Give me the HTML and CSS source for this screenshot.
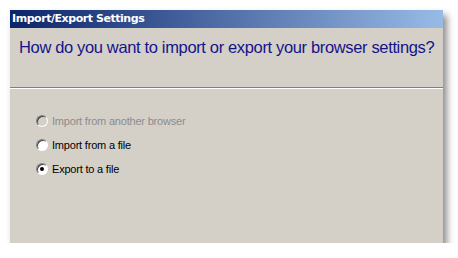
FILE: index.html
```
<!DOCTYPE html>
<html lang="en">
<head>
  <meta charset="UTF-8">
  <title>Import/Export Settings</title>
  <link rel="stylesheet" href="styles.css">
</head>
<body>

<div class="window">
  <div class="titlebar">Import/Export Settings</div>
  <div class="header">How do you want to import or export your browser settings?</div>
  <div class="separator"></div>
  <div class="options">
    <label class="option disabled"><span class="radio"></span>Import from another browser</label>
    <label class="option"><span class="radio"></span>Import from a file</label>
    <label class="option"><span class="radio checked"></span>Export to a file</label>
  </div>
</div>

</body>
</html>
```

FILE: styles.css
```
* { margin:0; padding:0; box-sizing:border-box; }

body { background:#fff; font-family:"Liberation Sans", Arial, sans-serif; }

.window { width:433px; height:233px; margin:10px 0 0 10px; background:#d4d0c8; box-shadow:4px 5px 7px rgba(0,0,0,.45); }

.titlebar { height:18px; padding:2px 0 0 2px; color:#fff; font:bold 11px "DejaVu Sans", Verdana, sans-serif; letter-spacing:-.45px;
  background:linear-gradient(to right, #0a246a, #98bbe6); }

.header { height:59px; padding:10px 0 0 9px; color:#14148a; font-size:16.5px; letter-spacing:-.35px; white-space:nowrap; }

.separator { border-top:1px solid #808080; border-bottom:1px solid #fff; }

.options { display:flex; flex-direction:column; gap:11px; padding:25px 0 0 26px; }

.option { display:flex; align-items:center; gap:4px; height:13px; font-size:11px; letter-spacing:-.2px; color:#000; }
.option.disabled { color:#8c8c8c; }

.radio { width:12px; height:12px; border-radius:50%; background:#fff; position:relative;
  border:1px solid; border-color:#808080 #fff #fff #808080; box-shadow:inset 1px 1px 0 #404040; }
.disabled .radio { background:#d4d0c8; }
.radio.checked::after { content:""; position:absolute; left:3px; top:3px; width:4px; height:4px; border-radius:50%; background:#000; }
```
